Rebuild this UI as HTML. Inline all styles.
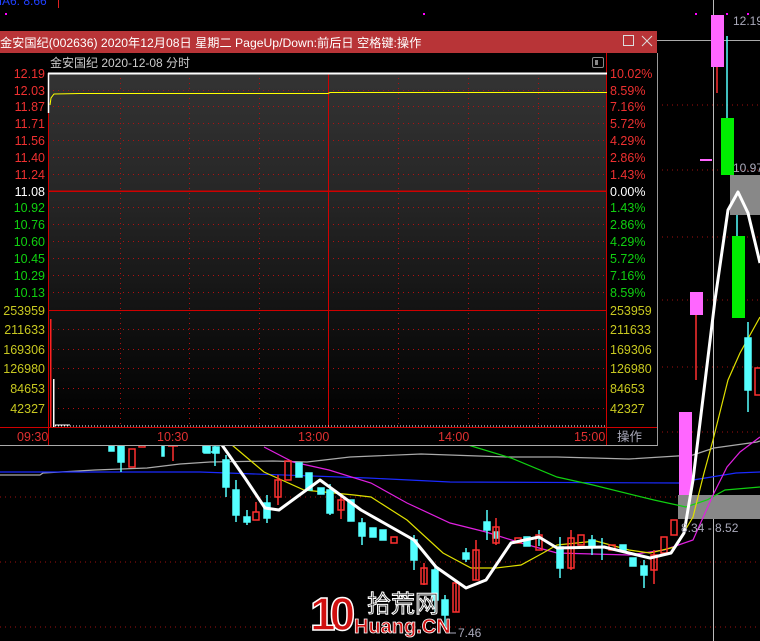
<!DOCTYPE html>
<html><head><meta charset="utf-8"><style>
html,body{margin:0;padding:0;background:#000;width:760px;height:641px;overflow:hidden}
svg{display:block}
text{font-family:"Liberation Sans","Noto Sans CJK SC",sans-serif}
</style></head><body>
<svg width="760" height="641" viewBox="0 0 760 641" xmlns="http://www.w3.org/2000/svg">
<defs>
<linearGradient id="bg" x1="0" y1="0" x2="0" y2="1">
<stop offset="0" stop-color="#333"/><stop offset="0.35" stop-color="#262626"/><stop offset="0.7" stop-color="#111"/><stop offset="1" stop-color="#000"/>
</linearGradient>
</defs>
<rect width="760" height="641" fill="#000"/>
<g stroke="#a01010" stroke-dasharray="1,4" stroke-width="1">
<line x1="657" y1="105" x2="760" y2="105"/><line x1="657" y1="170" x2="760" y2="170"/>
<line x1="657" y1="237" x2="760" y2="237"/><line x1="657" y1="300" x2="760" y2="300"/>
<line x1="657" y1="367" x2="760" y2="367"/><line x1="657" y1="432" x2="760" y2="432"/>
<line x1="0" y1="497" x2="760" y2="497"/><line x1="0" y1="562" x2="760" y2="562"/><line x1="0" y1="627" x2="760" y2="627"/>
</g>
<line x1="713.5" y1="0" x2="713.5" y2="641" stroke="#bbb"/>
<line x1="657" y1="40.5" x2="760" y2="40.5" stroke="#aaa"/>
<rect x="678" y="495" width="82" height="24" fill="#888"/>
<rect x="730" y="175" width="30" height="40" fill="#888"/>
<text x="-8" y="5" fill="#2040ff" font-size="12">MA6: 8.66</text>
<line x1="58.5" y1="0" x2="58.5" y2="8" stroke="#e02020"/>
<g fill="#ff00ff"><rect x="5" y="13" width="2" height="2"/><rect x="423" y="13" width="2" height="2"/><rect x="695" y="13" width="2" height="2"/><rect x="726" y="13" width="2" height="2"/><rect x="747" y="13" width="2" height="2"/></g>
<g fill="none" stroke-width="1.2">
<polyline stroke="#aaa" points="0,475 40,475 43,473 95,470 147,468 180,464 210,462 273,461 307,462 350,457 421,454 507,457 557,457 629,459 693,455 714,448 757,442 760,441"/>
<polyline stroke="#1a2aff" points="0,472 200,472 368,478 450,482 679,483 693,480 736,473 760,472"/>
<polyline stroke="#10d010" points="468,445 511,458 557,477 593,485 654,500 686,507 707,500 725,490 760,487"/>
<polyline stroke="#e020e0" points="264,447 293,462 329,470 371,483 407,503 450,523 486,532 521,543 557,553 629,555 664,550 693,540 714,493 727,467 740,452 760,437"/>
<polyline stroke="#e0e000" points="232,445 264,472 304,490 354,495 371,497 407,520 443,553 471,568 496,568 521,565 543,553 557,545 596,541 629,550 650,553 675,547 693,517 704,473 713,440 728,380 740,353 760,317"/>
</g>
<g stroke-width="1.5">
<g fill="#55ffff" stroke="#55ffff">
<rect x="109" y="445" width="5" height="6"/>
<line x1="121" y1="445" x2="121" y2="472"/><rect x="118" y="445" width="6" height="17"/>
<rect x="162" y="445" width="2" height="11"/>
<rect x="203" y="445" width="5" height="7"/>
<line x1="215" y1="445" x2="215" y2="466"/><line x1="211" y1="452" x2="219" y2="452"/>
<rect x="204" y="445" width="6" height="8"/><rect x="213" y="447" width="6" height="6"/>
<line x1="226" y1="455" x2="226" y2="497"/><rect x="223" y="460" width="6" height="27"/>
<line x1="236" y1="480" x2="236" y2="522"/><rect x="233" y="490" width="6" height="25"/>
<line x1="247" y1="510" x2="247" y2="525"/><rect x="244" y="517" width="6" height="5"/>
<line x1="267" y1="495" x2="267" y2="523"/><rect x="264" y="503" width="6" height="15"/>
<rect x="296" y="463" width="6" height="14"/><rect x="306" y="473" width="6" height="17"/>
<rect x="318" y="488" width="6" height="6"/><line x1="330" y1="484" x2="330" y2="515"/><rect x="327" y="490" width="6" height="23"/>
<rect x="348" y="500" width="6" height="21"/><line x1="362" y1="518" x2="362" y2="545"/><rect x="359" y="523" width="6" height="13"/>
<rect x="370" y="528" width="6" height="9"/><rect x="380" y="530" width="6" height="10"/>
<line x1="414" y1="535" x2="414" y2="570"/><rect x="411" y="540" width="6" height="20"/>
<line x1="435" y1="565" x2="435" y2="613"/><rect x="432" y="570" width="6" height="30"/>
<line x1="445" y1="595" x2="445" y2="627"/><rect x="442" y="600" width="6" height="15"/>
<line x1="466" y1="548" x2="466" y2="562"/><rect x="463" y="553" width="6" height="6"/>
<line x1="487" y1="510" x2="487" y2="540"/><rect x="484" y="522" width="6" height="8"/>
<rect x="493" y="532" width="6" height="6"/><rect x="524" y="537" width="6" height="9"/>
<line x1="539" y1="530" x2="539" y2="546"/>
<line x1="560" y1="537" x2="560" y2="578"/><rect x="557" y="547" width="6" height="21"/>
<line x1="592" y1="535" x2="592" y2="555"/><rect x="589" y="540" width="6" height="7"/>
<line x1="602" y1="538" x2="602" y2="560"/><rect x="620" y="545" width="6" height="5"/>
<rect x="630" y="558" width="6" height="8"/><line x1="644" y1="560" x2="644" y2="588"/><rect x="641" y="566" width="6" height="9"/>
<line x1="737" y1="215" x2="737" y2="236"/>
<line x1="748" y1="322" x2="748" y2="412"/><rect x="745" y="338" width="6" height="52"/>
<line x1="727" y1="36" x2="727" y2="118"/>
</g>
<g fill="none" stroke="#ff3030">
<rect x="129" y="449" width="6" height="18"/><rect x="139" y="445" width="6" height="2"/>
<line x1="173" y1="445" x2="173" y2="461"/><line x1="168" y1="446" x2="178" y2="446"/>
<line x1="256" y1="502" x2="256" y2="512"/><rect x="253" y="512" width="6" height="8"/>
<line x1="278" y1="475" x2="278" y2="505"/><rect x="275" y="480" width="6" height="17"/>
<rect x="285" y="461" width="6" height="19"/>
<line x1="341" y1="495" x2="341" y2="519"/><rect x="338" y="500" width="6" height="10"/>
<rect x="391" y="537" width="6" height="6"/>
<line x1="424" y1="563" x2="424" y2="585"/><rect x="421" y="568" width="6" height="16"/>
<line x1="456" y1="580" x2="456" y2="612"/><rect x="453" y="583" width="6" height="29"/>
<line x1="476" y1="540" x2="476" y2="580"/><rect x="473" y="550" width="6" height="30"/>
<line x1="496" y1="518" x2="496" y2="545"/><rect x="493" y="527" width="6" height="16"/>
<rect x="515" y="538" width="6" height="5"/>
<rect x="536" y="535" width="6" height="15"/>
<line x1="571" y1="530" x2="571" y2="570"/><rect x="568" y="538" width="6" height="30"/>
<rect x="578" y="535" width="6" height="10"/><rect x="609" y="545" width="6" height="5"/>
<line x1="654" y1="550" x2="654" y2="584"/><rect x="651" y="555" width="6" height="15"/>
<rect x="661" y="537" width="6" height="16"/><rect x="671" y="520" width="6" height="15"/>
<rect x="755" y="368" width="6" height="27"/>
<line x1="717" y1="67" x2="717" y2="93"/><line x1="696" y1="315" x2="696" y2="380"/>
</g>
<rect x="721" y="118" width="13" height="57" fill="#00ee00"/>
<rect x="732" y="236" width="13" height="82" fill="#00ee00"/>
<rect x="711" y="15" width="13" height="52" fill="#ff66ff"/>
<rect x="690" y="292" width="13" height="23" fill="#ff66ff"/>
<rect x="679" y="412" width="13" height="83" fill="#ff66ff"/>
<rect x="700" y="159" width="12" height="2" fill="#ff66ff"/>
</g>
<polyline fill="none" stroke="#fff" stroke-width="3" stroke-linejoin="round" points="222,445 245,478 265,508 279,510 320,480 361,510 414,540 436,567 466,588 486,580 511,543 539,537 557,548 604,547 629,553 650,558 671,553 684,533 693,480 715,300 728,210 738,192 748,213 760,263"/>
<g fill="#aab" font-size="12">
<text x="733" y="25">12.19</text><text x="733" y="172">10.97</text>
<text x="681" y="532">8.34  -  8.52</text><text x="458" y="637">7.46</text>
</g>
<line x1="446" y1="633" x2="456" y2="633" stroke="#aab"/>
<text x="310" y="630" font-size="46" font-weight="bold" fill="#d01010" stroke="#fff" stroke-width="1.5" font-family="Liberation Sans" letter-spacing="-6">10</text>
<text x="367" y="612" font-size="24" fill="#222" stroke="#fff" stroke-width="1" font-family="Noto Sans CJK SC">拾荒网</text>
<text x="354" y="633" font-size="20" font-weight="bold" fill="#d01010" stroke="#fff" stroke-width="0.8">Huang.CN</text>

<rect x="0" y="31" width="657" height="414" fill="#000"/>
<rect x="0" y="31" width="657" height="22" fill="#b83437"/>
<text x="0" y="47" fill="#fff" font-size="12.2">金安国纪(002636) 2020年12月08日 星期二 PageUp/Down:前后日 空格键:操作</text>
<rect x="623.5" y="35.5" width="10" height="10" fill="none" stroke="#ddd"/>
<path d="M642 36 L652 46 M652 36 L642 46" stroke="#ddd" stroke-width="1"/>
<line x1="657.5" y1="53" x2="657.5" y2="446" stroke="#999"/>
<line x1="0" y1="445.5" x2="657" y2="445.5" stroke="#aaa"/>
<text x="50" y="67" fill="#ccc" font-size="12">金安国纪  2020-12-08 分时</text>
<rect x="592.5" y="57.5" width="11" height="10" rx="1.5" fill="none" stroke="#888"/><rect x="595" y="60" width="3" height="5" fill="#888"/>
<rect x="48" y="73" width="559" height="355" fill="url(#bg)"/>
<g stroke="#b01010" stroke-dasharray="1,4">
<line x1="48" y1="90.5" x2="607" y2="90.5"/><line x1="48" y1="106.5" x2="607" y2="106.5"/><line x1="48" y1="123.5" x2="607" y2="123.5"/>
<line x1="48" y1="140.5" x2="607" y2="140.5"/><line x1="48" y1="157.5" x2="607" y2="157.5"/><line x1="48" y1="174.5" x2="607" y2="174.5"/>
<line x1="48" y1="207.5" x2="607" y2="207.5"/><line x1="48" y1="224.5" x2="607" y2="224.5"/><line x1="48" y1="241.5" x2="607" y2="241.5"/>
<line x1="48" y1="258.5" x2="607" y2="258.5"/><line x1="48" y1="275.5" x2="607" y2="275.5"/><line x1="48" y1="292.5" x2="607" y2="292.5"/>
<line x1="48" y1="329.5" x2="607" y2="329.5"/><line x1="48" y1="349.5" x2="607" y2="349.5"/><line x1="48" y1="368.5" x2="607" y2="368.5"/>
<line x1="48" y1="388.5" x2="607" y2="388.5"/><line x1="48" y1="408.5" x2="607" y2="408.5"/>
<line x1="120.5" y1="73" x2="120.5" y2="428"/><line x1="189.5" y1="73" x2="189.5" y2="428"/><line x1="259.5" y1="73" x2="259.5" y2="428"/>
<line x1="398.5" y1="73" x2="398.5" y2="428"/><line x1="468.5" y1="73" x2="468.5" y2="428"/><line x1="538.5" y1="73" x2="538.5" y2="428"/>
</g>
<rect x="48" y="190.5" width="559" height="1.5" fill="#d00000"/>
<g stroke="#d00000">
<line x1="48" y1="310.5" x2="607" y2="310.5"/>
<line x1="0" y1="427.5" x2="657" y2="427.5"/>
<line x1="48.5" y1="73" x2="48.5" y2="445"/><line x1="328.5" y1="73" x2="328.5" y2="428"/><line x1="606.5" y1="53" x2="606.5" y2="445"/>
</g>
<line x1="48" y1="73.5" x2="607" y2="73.5" stroke="#fff" stroke-width="2"/>
<line x1="48.5" y1="73" x2="48.5" y2="113" stroke="#fff" stroke-width="1.5"/>
<polyline fill="none" stroke="#ffff00" points="50,105 51,98 54,94 80,93.5 328,93.5 330,92.5 607,92.5"/>
<rect x="50" y="319" width="1.5" height="108" fill="#ff2020"/>
<rect x="53" y="379" width="1.5" height="48" fill="#fff"/>
<line x1="55" y1="426" x2="607" y2="426" stroke="#fff" stroke-dasharray="1,2"/>
<line x1="55" y1="425" x2="70" y2="425" stroke="#fff"/>
<g font-size="12.5" text-anchor="end">
<g fill="#ee3030"><text x="45" y="78">12.19</text><text x="45" y="95">12.03</text><text x="45" y="111">11.87</text><text x="45" y="128">11.71</text><text x="45" y="145">11.56</text><text x="45" y="162">11.40</text><text x="45" y="179">11.24</text></g>
<text x="45" y="196" fill="#fff">11.08</text>
<g fill="#10d010"><text x="45" y="212">10.92</text><text x="45" y="229">10.76</text><text x="45" y="246">10.60</text><text x="45" y="263">10.45</text><text x="45" y="280">10.29</text><text x="45" y="297">10.13</text></g>
<g fill="#c8c820"><text x="45" y="315">253959</text><text x="45" y="334">211633</text><text x="45" y="354">169306</text><text x="45" y="373">126980</text><text x="45" y="393">84653</text><text x="45" y="413">42327</text></g>
</g>
<g font-size="12.5">
<g fill="#ee3030"><text x="610" y="78">10.02%</text><text x="610" y="95">8.59%</text><text x="610" y="111">7.16%</text><text x="610" y="128">5.72%</text><text x="610" y="145">4.29%</text><text x="610" y="162">2.86%</text><text x="610" y="179">1.43%</text></g>
<text x="610" y="196" fill="#fff">0.00%</text>
<g fill="#10d010"><text x="610" y="212">1.43%</text><text x="610" y="229">2.86%</text><text x="610" y="246">4.29%</text><text x="610" y="263">5.72%</text><text x="610" y="280">7.16%</text><text x="610" y="297">8.59%</text></g>
<g fill="#c8c820"><text x="610" y="315">253959</text><text x="610" y="334">211633</text><text x="610" y="354">169306</text><text x="610" y="373">126980</text><text x="610" y="393">84653</text><text x="610" y="413">42327</text></g>
<g fill="#e03030"><text x="17" y="441">09:30</text><text x="157" y="441">10:30</text><text x="298" y="441">13:00</text><text x="438" y="441">14:00</text><text x="574" y="441">15:00</text></g>
<text x="617" y="441" fill="#aab">操作</text>
</g>
</svg>
</body></html>
